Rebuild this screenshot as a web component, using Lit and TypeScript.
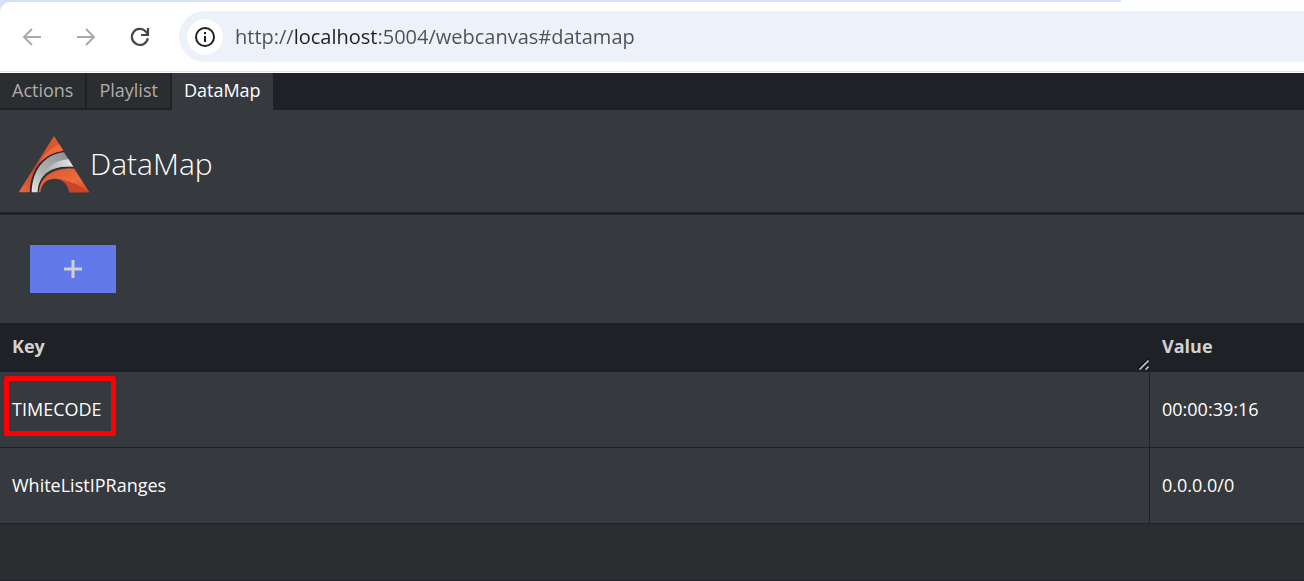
import { LitElement, html, css } from "lit";
import { customElement, state } from "lit/decorators.js";

interface Entry {
  key: string;
  value: string;
  marked?: boolean;
}

@customElement("browser-bar")
class BrowserBar extends LitElement {
  static styles = css`
    :host {
      display: block;
      background: #fff;
      border-bottom: 1px solid #fff;
    }
    .strip {
      height: 2px;
      width: 86%;
      background: #d3e3fd;
    }
    .under {
      background: linear-gradient(to right, #d3e3fd 50%, #fff 50%);
    }
    .bar {
      display: flex;
      align-items: center;
      background: #fff;
      border-radius: 10px 0 0 0;
      border-bottom: 1px solid #dfe2df;
      padding: 9px 0;
    }
    .nav {
      display: flex;
      gap: 30px;
      padding: 0 27px 0 20px;
    }
    .nav button {
      display: grid;
      width: 24px;
      height: 24px;
      padding: 0;
      border: 0;
      background: none;
      color: #474747;
    }
    .nav button:disabled {
      color: #aaa;
    }
    .box {
      flex: 1;
      display: flex;
      align-items: center;
      gap: 12px;
      height: 51px;
      padding-left: 8px;
      border-radius: 26px 0 0 26px;
      background: #ecf1fa;
    }
    .info {
      display: grid;
      place-items: center;
      width: 36px;
      height: 36px;
      padding: 0;
      border: 0;
      border-radius: 50%;
      background: #fff;
      color: #1f1f1f;
    }
    .url {
      flex: 1;
      min-width: 0;
      height: 32px;
      padding: 0;
      border: 0;
      outline: 0;
      font: 20px/32px "Open Sans", "Noto Sans", sans-serif;
      color: transparent;
      caret-color: #1f1f1f;
      background: linear-gradient(to right, #4c4f53 59px, #1f1f1f 59px 142px, #4c4f53 142px);
      -webkit-background-clip: text;
      background-clip: text;
    }
  `;

  render() {
    return html`
      <div class="strip"></div>
      <div class="under">
        <div class="bar">
          <div class="nav">
            <button aria-label="Back" disabled>
              <svg width="24" height="24" viewBox="0 0 24 24" fill="none" stroke="currentColor" stroke-width="2">
                <path d="M21 12H4.5M12 4l-8 8 8 8" />
              </svg>
            </button>
            <button aria-label="Forward" disabled>
              <svg width="24" height="24" viewBox="0 0 24 24" fill="none" stroke="currentColor" stroke-width="2">
                <path d="M3 12h16.500M12 4l8 8-8 8" />
              </svg>
            </button>
            <button aria-label="Reload">
              <svg width="24" height="24" viewBox="0 0 24 24" fill="none" stroke="currentColor" stroke-width="2.200">
                <path d="M19.800 13.300A8 8 0 1 1 17.800 6.500L19.500 8.500M20 3v7h-7" />
              </svg>
            </button>
          </div>
          <div class="box">
            <button class="info" aria-label="Site information">
              <svg width="22" height="22" viewBox="0 0 22 22" fill="none" stroke="currentColor" stroke-width="2">
                <circle cx="11" cy="11" r="9" />
                <path d="M11 10v6M11 6v2.200" />
              </svg>
            </button>
            <input class="url" aria-label="Address" value="http://localhost:5004/webcanvas#datamap" spellcheck="false" />
          </div>
        </div>
      </div>
    `;
  }
}

@customElement("app-root")
class AppRoot extends LitElement {
  @state() private active = "DataMap";

  private tabs = ["Actions", "Playlist", "DataMap"];

  private entries: Entry[] = [
    { key: "TIMECODE", value: "00:00:39:16", marked: true },
    { key: "WhiteListIPRanges", value: "0.0.0.0/0" },
  ];

  static styles = css`
    :host {
      display: flex;
      flex-direction: column;
      box-sizing: border-box;
      min-height: 100vh;
      background: #2b2e31;
      border-bottom: 1px solid #1f2226;
      color: #fff;
      font: 18px/24px "Open Sans", "Noto Sans", sans-serif;
    }
    .tabs {
      display: flex;
      background: #1e2125;
    }
    .tab {
      padding: 5px 12px 6px;
      border: solid #1e2125;
      border-width: 0 2px 2px 0;
      background: #2b2e31;
      color: #adadad;
      font: inherit;
    }
    .tab.active {
      border-color: #36393e;
      border-right-width: 0;
      background: #36393e;
      color: #fff;
    }
    .head {
      display: flex;
      align-items: center;
      padding: 24px 18px 18px;
      border-bottom: 3px solid #1e2125;
      background: #36393e;
    }
    .logo {
      display: block;
    }
    h1 {
      margin: 0;
      font-size: 30px;
      line-height: 60px;
      font-weight: 300;
    }
    .tools {
      padding: 30px;
      background: #36393e;
    }
    .add {
      display: grid;
      place-items: center;
      width: 86px;
      height: 48px;
      padding: 0;
      border: 0;
      background: #6179e9;
      color: #d0d0d3;
    }
    table {
      width: 100%;
      table-layout: fixed;
      border-collapse: separate;
      border-spacing: 0;
    }
    th {
      position: relative;
      padding: 11px 12px 14px;
      background: #1e2125;
      color: #d2d2d2;
      font-weight: 700;
      text-align: left;
    }
    .value {
      width: 130px;
    }
    .grip {
      position: absolute;
      right: 1px;
      bottom: 2px;
    }
    td {
      padding: 25px 12px 26px;
      border-bottom: 1px solid #1e2125;
      background: #36393e;
    }
    td:first-child {
      border-right: 1px solid #1e2125;
    }
    .marked {
      position: relative;
    }
    .marked::after {
      content: "";
      position: absolute;
      inset: -21px -14px -15px -8px;
      border: 5px solid #f00;
      border-radius: 3px;
    }
  `;

  render() {
    return html`
      <browser-bar></browser-bar>
      <nav class="tabs" role="tablist">
        ${this.tabs.map(
          (t) => html`<button
            class="tab ${t === this.active ? "active" : ""}"
            role="tab"
            aria-selected=${t === this.active}
            @click=${() => (this.active = t)}
          >${t}</button>`
        )}
      </nav>
      <header class="head">
        <svg class="logo" width="72" height="60" viewBox="24 12 216 180" aria-hidden="true">
          <defs>
            <linearGradient id="up" x1="0" y1="1" x2="1" y2="0">
              <stop offset="0" stop-color="#e8693c" />
              <stop offset=".4" stop-color="#c9472a" />
              <stop offset=".7" stop-color="#d9532c" />
              <stop offset="1" stop-color="#dd5b2f" />
            </linearGradient>
            <linearGradient id="band" x1="0" y1="1" x2="1" y2="0.200">
              <stop offset="0" stop-color="#e6e6e6" />
              <stop offset=".4" stop-color="#b0b0b0" />
              <stop offset="1" stop-color="#8f8f8f" />
            </linearGradient>
            <linearGradient id="shine" x1="0" y1="0" x2="1" y2="0">
              <stop offset="0" stop-color="#a8a8a8" />
              <stop offset="1" stop-color="#e6e6e6" />
            </linearGradient>
            <linearGradient id="low" x1="0" y1="0" x2="1" y2="1">
              <stop offset="0" stop-color="#d9532d" />
              <stop offset=".6" stop-color="#ee6c3c" />
              <stop offset="1" stop-color="#d04a2a" />
            </linearGradient>
          </defs>
          <path fill="#292b2e" d="M60 187C62 112 103 68 158 61L162 67 191 112 150 115C115 120 88 145 86 187Z" />
          <path fill="url(#up)" d="M26 187L132 18 160 62C101 70 62 112 59 187Z" />
          <path fill="#ee6a39" d="M148 43L160 62C130 66 108 78 88 100 104 69 126 53 148 43Z" />
          <path fill="url(#band)" d="M65 187C67 124 100 74 162 67L190 110C134 106 86 126 83 187Z" />
          <path fill="url(#shine)" d="M176 88L190 110C150 107 119 115 98 137 113 105 142 91 176 88Z" />
          <path fill="url(#low)" d="M87 187C90 143 124 113 193 116L238 187H178C174 160 157 146 134 146 110 146 94 161 91 187Z" />
          <path fill="#c9452a" d="M145 147C180 153 211 165 238 187H178C174 165 164 151 145 147Z" />
        </svg>
        <h1>DataMap</h1>
      </header>
      <div class="tools">
        <button class="add" aria-label="Add entry">
          <svg width="20" height="20" viewBox="0 0 20 20" fill="none" stroke="currentColor" stroke-width="3">
            <path d="M10 1v18M1 10h18" />
          </svg>
        </button>
      </div>
      <table>
        <thead>
          <tr>
            <th>
              Key
              <svg class="grip" width="11" height="11" viewBox="0 0 11 11" fill="none">
                <path d="M0 10L10 0M5.500 10.500L10.500 5.500" stroke="#0c0d0e" stroke-width="1.500" />
                <path d="M1.500 10.500L10.500 1.500M7.500 10.500L10.500 7.500" stroke="#c4c4c4" stroke-width="1.600" />
              </svg>
            </th>
            <th class="value">Value</th>
          </tr>
        </thead>
        <tbody>
          ${this.entries.map(
            (e) => html`<tr>
              <td><span class=${e.marked ? "marked" : ""}>${e.key}</span></td>
              <td>${e.value}</td>
            </tr>`
          )}
        </tbody>
      </table>
    `;
  }
}
